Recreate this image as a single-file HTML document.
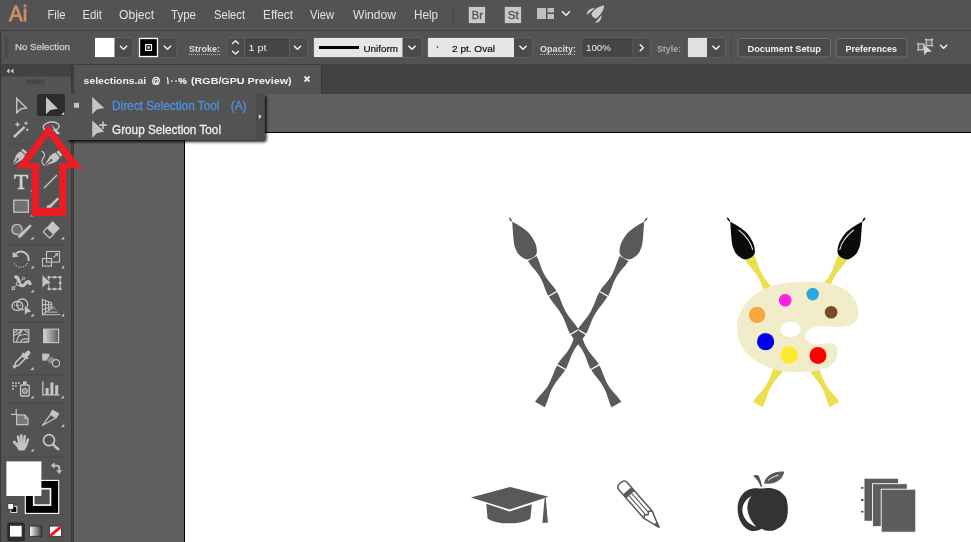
<!DOCTYPE html>
<html lang="en">
<head>
<meta charset="utf-8">
<title>selections.ai - Adobe Illustrator</title>
<style>
html,body{margin:0;padding:0;background:#535353;overflow:hidden;}
body{width:971px;height:542px;position:relative;font-family:"Liberation Sans", "DejaVu Sans", sans-serif;}
svg{position:absolute;left:0;top:0;display:block;will-change:transform;}
svg text{font-family:"Liberation Sans", "DejaVu Sans", sans-serif;}
</style>
</head>
<body>
<svg width="971" height="542" viewBox="0 0 971 542">
<rect x="0" y="0" width="971" height="542" fill="#535353"/>
<rect x="74" y="94" width="897" height="448" fill="#606060"/>
<rect x="184.5" y="132.5" width="790" height="420" fill="#ffffff" stroke="#000000" stroke-width="1"/>
<rect x="72" y="64" width="899" height="30" fill="#424242"/>
<rect x="74" y="65" width="247" height="29" fill="#535353"/>
<rect x="71" y="64" width="3" height="478" fill="#3a3a3a"/><rect x="72" y="77" width="1" height="465" fill="#444"/>
<rect x="0" y="30" width="971" height="1" fill="#434343"/>
<rect x="0" y="64" width="971" height="1" fill="#3f3f3f"/>
<rect x="0" y="31" width="1.2" height="33" fill="#3a3a3a"/>
<rect x="321" y="65" width="1" height="29" fill="#383838"/>
<rect x="0" y="65" width="71" height="11.4" fill="#424242"/>
<rect x="0" y="64" width="1" height="478" fill="#3a3a3a"/>
<text x="9" y="21.3" font-size="21.5" fill="#c9916b" font-weight="normal" text-anchor="start" textLength="18.2" lengthAdjust="spacingAndGlyphs" stroke="#c9916b" stroke-width="0.9">Ai</text>
<text x="47.5" y="19.3" font-size="13" fill="#e2e2e2" font-weight="normal" text-anchor="start" textLength="18" lengthAdjust="spacingAndGlyphs" >File</text>
<text x="82.5" y="19.3" font-size="13" fill="#e2e2e2" font-weight="normal" text-anchor="start" textLength="19.5" lengthAdjust="spacingAndGlyphs" >Edit</text>
<text x="119" y="19.3" font-size="13" fill="#e2e2e2" font-weight="normal" text-anchor="start" textLength="35" lengthAdjust="spacingAndGlyphs" >Object</text>
<text x="171" y="19.3" font-size="13" fill="#e2e2e2" font-weight="normal" text-anchor="start" textLength="25" lengthAdjust="spacingAndGlyphs" >Type</text>
<text x="214" y="19.3" font-size="13" fill="#e2e2e2" font-weight="normal" text-anchor="start" textLength="31" lengthAdjust="spacingAndGlyphs" >Select</text>
<text x="263" y="19.3" font-size="13" fill="#e2e2e2" font-weight="normal" text-anchor="start" textLength="30" lengthAdjust="spacingAndGlyphs" >Effect</text>
<text x="310" y="19.3" font-size="13" fill="#e2e2e2" font-weight="normal" text-anchor="start" textLength="24" lengthAdjust="spacingAndGlyphs" >View</text>
<text x="353" y="19.3" font-size="13" fill="#e2e2e2" font-weight="normal" text-anchor="start" textLength="43" lengthAdjust="spacingAndGlyphs" >Window</text>
<text x="414" y="19.3" font-size="13" fill="#e2e2e2" font-weight="normal" text-anchor="start" textLength="24" lengthAdjust="spacingAndGlyphs" >Help</text>
<rect x="452.5" y="5" width="1" height="20" fill="#444"/>
<rect x="468.8" y="6.9" width="16.3" height="16.2" fill="#c9c9c9"/>
<text x="471.8" y="19" font-size="10.8" fill="#555" font-weight="normal" text-anchor="start" textLength="11" lengthAdjust="spacingAndGlyphs" stroke="#555" stroke-width="0.35">Br</text>
<rect x="504.8" y="6.9" width="16.3" height="16.2" fill="#c9c9c9"/>
<text x="507.8" y="19" font-size="10.8" fill="#555" font-weight="normal" text-anchor="start" textLength="11" lengthAdjust="spacingAndGlyphs" stroke="#555" stroke-width="0.35">St</text>
<rect x="537" y="8" width="9" height="11" fill="#c0c0c0"/><rect x="547.5" y="8" width="6.5" height="4.5" fill="#c0c0c0"/><rect x="547.5" y="14" width="6.5" height="5" fill="#c0c0c0"/>
<path d="M562.5,11.7 L566,15.3 L569.5,11.7" fill="none" stroke="#f0f0f0" stroke-width="1.6" stroke-linecap="round" stroke-linejoin="round"/>
<g fill="#cdcdcd" transform="translate(604.2 5.6) rotate(45)"><path d="M0,0 C3,3.5 4.3,9 3.5,14.6 Q0,17.2 -3.5,14.6 C-4.3,9 -3,3.5 0,0 Z"/><path d="M4.6,8.6 C7.8,11 8.8,15.4 5.9,18.8 C5.4,16 5.4,13 4.6,8.6 Z"/><path d="M-4.6,8.6 C-7.8,11 -8.8,15.4 -5.9,18.8 C-5.4,16 -5.4,13 -4.6,8.6 Z"/></g>
<path d="M6.6,37.8 V57.2" stroke="#404040" stroke-width="3" stroke-dasharray="1 1"/>
<text x="15" y="49.9" font-size="9.7" fill="#cfcfcf" font-weight="normal" text-anchor="start" textLength="55" lengthAdjust="spacingAndGlyphs" stroke="#cfcfcf" stroke-width="0.25">No Selection</text>
<rect x="93.5" y="37.5" width="39.5" height="20" rx="2.5" fill="#4b4b4b" stroke="#606060" stroke-width="1"/>
<rect x="95" y="38" width="19.5" height="19" fill="#ffffff"/>
<path d="M120.4,46.2 L123.5,49.2 L126.6,46.2" fill="none" stroke="#f0f0f0" stroke-width="1.6" stroke-linecap="round" stroke-linejoin="round"/>
<rect x="137.5" y="37.5" width="39.5" height="20" rx="2.5" fill="#4b4b4b" stroke="#606060" stroke-width="1"/>
<rect x="139.5" y="38.5" width="18" height="18" fill="#000" stroke="#fff" stroke-width="1.3"/>
<rect x="145.7" y="44.6" width="5.8" height="5.8" fill="none" stroke="#fff" stroke-width="1.2"/><rect x="147.4" y="46.3" width="2.4" height="2.4" fill="#e4e4e4"/>
<path d="M164.4,46.2 L167.5,49.2 L170.6,46.2" fill="none" stroke="#f0f0f0" stroke-width="1.6" stroke-linecap="round" stroke-linejoin="round"/>
<text x="189" y="51.5" font-size="9.6" fill="#dcdcdc" font-weight="bold" text-anchor="start" textLength="31" lengthAdjust="spacingAndGlyphs" >Stroke:</text>
<path d="M189,54.5 H220" stroke="#bdbdbd" stroke-width="1" stroke-dasharray="1 1"/>
<rect x="227" y="37.5" width="80.5" height="20" rx="2.5" fill="#4b4b4b" stroke="#606060" stroke-width="1"/>
<rect x="245" y="38" width="44" height="19" fill="#454545"/>
<path d="M244.5,38 V57 M289.5,38 V57" stroke="#5f5f5f" stroke-width="1"/>
<path d="M232.5,43.6 L235.5,40.800000000000004 L238.5,43.6" fill="none" stroke="#f0f0f0" stroke-width="1.4" stroke-linecap="round" stroke-linejoin="round"/>
<path d="M232.5,51.2 L235.5,54.0 L238.5,51.2" fill="none" stroke="#f0f0f0" stroke-width="1.4" stroke-linecap="round" stroke-linejoin="round"/>
<text x="248.5" y="51" font-size="9.6" fill="#eaeaea" font-weight="normal" text-anchor="start" textLength="18" lengthAdjust="spacingAndGlyphs" >1 pt</text>
<path d="M294.4,46.2 L297.5,49.2 L300.6,46.2" fill="none" stroke="#f0f0f0" stroke-width="1.6" stroke-linecap="round" stroke-linejoin="round"/>
<rect x="313.5" y="37.5" width="108.5" height="20" rx="2.5" fill="#4b4b4b" stroke="#606060" stroke-width="1"/>
<rect x="314" y="38" width="88.5" height="19" fill="#e6e6e6"/>
<rect x="319" y="46" width="40" height="3" fill="#000"/>
<text x="363.5" y="51.5" font-size="9.6" fill="#111" font-weight="normal" text-anchor="start" textLength="34.5" lengthAdjust="spacingAndGlyphs" stroke="#111" stroke-width="0.2">Uniform</text>
<path d="M408.9,46.2 L412,49.2 L415.1,46.2" fill="none" stroke="#f0f0f0" stroke-width="1.6" stroke-linecap="round" stroke-linejoin="round"/>
<rect x="427.5" y="37.5" width="105" height="20" rx="2.5" fill="#4b4b4b" stroke="#606060" stroke-width="1"/>
<rect x="428" y="38" width="86" height="19" fill="#e6e6e6"/>
<circle cx="437.5" cy="47" r="0.8" fill="#222"/>
<text x="452" y="51.5" font-size="9.6" fill="#111" font-weight="normal" text-anchor="start" textLength="43" lengthAdjust="spacingAndGlyphs" stroke="#111" stroke-width="0.2">2 pt. Oval</text>
<path d="M519.9,46.2 L523,49.2 L526.1,46.2" fill="none" stroke="#f0f0f0" stroke-width="1.6" stroke-linecap="round" stroke-linejoin="round"/>
<text x="540" y="51.5" font-size="9.6" fill="#dcdcdc" font-weight="bold" text-anchor="start" textLength="36" lengthAdjust="spacingAndGlyphs" >Opacity:</text>
<path d="M540,54.5 H576" stroke="#bdbdbd" stroke-width="1" stroke-dasharray="1 1"/>
<rect x="582" y="37.5" width="69" height="20" rx="2.5" fill="#4b4b4b" stroke="#606060" stroke-width="1"/>
<rect x="582.5" y="38" width="50" height="19" fill="#454545"/>
<path d="M633,38 V57" stroke="#5f5f5f" stroke-width="1"/>
<text x="586" y="51" font-size="9.6" fill="#eaeaea" font-weight="normal" text-anchor="start" textLength="25" lengthAdjust="spacingAndGlyphs" >100%</text>
<path d="M640.2,44.7 L643.3,47.7 L640.2,50.7" fill="none" stroke="#f0f0f0" stroke-width="1.5" stroke-linecap="round" stroke-linejoin="round"/>
<text x="657" y="51.5" font-size="9.6" fill="#a9a9a9" font-weight="bold" text-anchor="start" textLength="24" lengthAdjust="spacingAndGlyphs" >Style:</text>
<rect x="687.5" y="37.5" width="38" height="20" rx="2.5" fill="#4b4b4b" stroke="#606060" stroke-width="1"/>
<rect x="688" y="38" width="19" height="19" fill="#e0e0e0"/>
<path d="M712.9,46.2 L716,49.2 L719.1,46.2" fill="none" stroke="#f0f0f0" stroke-width="1.6" stroke-linecap="round" stroke-linejoin="round"/>
<rect x="731" y="37" width="1" height="22" fill="#464646"/>
<rect x="738" y="38.5" width="92.5" height="18.5" rx="3" fill="#4a4a4a" stroke="#707070" stroke-width="1"/>
<text x="747.5" y="51.6" font-size="9.6" fill="#f2f2f2" font-weight="bold" text-anchor="start" textLength="73.5" lengthAdjust="spacingAndGlyphs" >Document Setup</text>
<rect x="836" y="38.5" width="71" height="18.5" rx="3" fill="#4a4a4a" stroke="#707070" stroke-width="1"/>
<text x="845.5" y="51.6" font-size="9.6" fill="#f2f2f2" font-weight="bold" text-anchor="start" textLength="51.5" lengthAdjust="spacingAndGlyphs" >Preferences</text>
<g fill="#6a6a6a" stroke="#d0d0d0" stroke-width="1.1"><rect x="918.2" y="44" width="5.6" height="5.8"/><rect x="926.2" y="39.8" width="5.8" height="5.8"/></g><g fill="#d0d0d0"><circle cx="917.8" cy="43.6" r="0.8"/><circle cx="917.8" cy="50.2" r="0.8"/><circle cx="925.8" cy="39.4" r="0.8"/><circle cx="932.4" cy="39.4" r="0.8"/><circle cx="932.4" cy="46" r="0.8"/></g><path d="M924.1,44.4 L924.1,55.4 L927,52 L931.8,51.4 Z" fill="#d4d4d4"/>
<path d="M940.5,45.3 L943.6,48.3 L946.7,45.3" fill="none" stroke="#f0f0f0" stroke-width="1.6" stroke-linecap="round" stroke-linejoin="round"/>
<text x="83.6" y="83.5" font-size="9.8" fill="#f0f0f0" font-weight="bold" text-anchor="start" textLength="62.6" lengthAdjust="spacingAndGlyphs" >selections.ai</text>
<text x="151.8" y="83.8" font-size="9.2" fill="#f0f0f0" font-weight="normal" text-anchor="start" textLength="8.6" lengthAdjust="spacingAndGlyphs" stroke="#f0f0f0" stroke-width="0.45">@</text>
<text x="165.8" y="83.5" font-size="10.5" fill="#f0f0f0" font-weight="bold" text-anchor="start" textLength="12.2" lengthAdjust="spacingAndGlyphs" >۱۰۰</text>
<text x="178.2" y="83.5" font-size="9.8" fill="#f0f0f0" font-weight="bold" text-anchor="start" textLength="8.6" lengthAdjust="spacingAndGlyphs" stroke="#f0f0f0" stroke-width="0.2">%</text>
<text x="191" y="83.5" font-size="9.8" fill="#f0f0f0" font-weight="bold" text-anchor="start" textLength="100.7" lengthAdjust="spacingAndGlyphs" >(RGB/GPU Preview)</text>
<path d="M304.5,76.5 L309.5,81.5 M309.5,76.5 L304.5,81.5" stroke="#e8e8e8" stroke-width="1.8"/>
<path d="M9.5,68.5 L6.5,71 L9.5,73.5 Z M13.5,68.5 L10.5,71 L13.5,73.5 Z" fill="#d0d0d0"/>
<path d="M26,82 H45" stroke="#3e3e3e" stroke-width="5" stroke-dasharray="1 1.1" transform="translate(0,0)"/>
<rect x="8" y="143.5" width="56" height="1" fill="#484848"/>
<rect x="8" y="244.5" width="56" height="1" fill="#484848"/>
<rect x="8" y="321.5" width="56" height="1" fill="#484848"/>
<rect x="8" y="374.5" width="56" height="1" fill="#484848"/>
<rect x="8" y="402.5" width="56" height="1" fill="#484848"/>
<rect x="8" y="456.5" width="56" height="1" fill="#484848"/>
<rect x="36.9" y="94" width="28.1" height="21.9" rx="3" fill="#2c2c2c"/>
<path d="M16.7,98.4 L16.7,112.6 L21,108.9 L26.4,108 Z" fill="none" stroke="#c4c4c4" stroke-width="1.45" stroke-linejoin="miter"/>
<path d="M46,97 L46,114.2 L50.3,110 L58,108.7 Z" fill="#c4c4c4"/>
<path d="M64.2,115 L61.0,115 L64.2,111.8 Z" fill="#c4c4c4"/>
<path d="M13.9,137 L24.6,126.8" stroke="#c4c4c4" stroke-width="2.5" stroke-linecap="butt"/>
<path d="M17.5,121.5 l0.9,2 l2,0.9 l-2,0.9 l-0.9,2 l-0.9,-2 l-2,-0.9 l2,-0.9 Z M26,121 l0.7,1.6 l1.6,0.7 l-1.6,0.7 l-0.7,1.6 l-0.7,-1.6 l-1.6,-0.7 l1.6,-0.7 Z M27.3,128 l0.6,1.2 l1.2,0.6 l-1.2,0.6 l-0.6,1.2 l-0.6,-1.2 l-1.2,-0.6 l1.2,-0.6 Z" fill="#c4c4c4"/>
<ellipse cx="51.2" cy="126.6" rx="8" ry="4.6" fill="none" stroke="#c4c4c4" stroke-width="1.4" transform="rotate(-6 51.2 126.6)"/>
<path d="M51.4,124.8 L60.4,133.8 L56.6,134.2 L54.4,130.4 Z" fill="#c4c4c4"/>
<g transform="translate(19.2 157.4) rotate(40) scale(0.95)" fill="#c4c4c4"><path d="M-2.9,-9.6 h5.8 v2.7 h-5.8 Z"/><path d="M-3.1,-6 h6.2 C4.6,-2.5 4.2,0.5 3,3.2 L0.55,9.6 L0.55,3.3 a1.15,1.15 0 1 0 -1.1,0 L-0.55,9.6 L-3,3.2 C-4.2,0.5 -4.6,-2.5 -3.1,-6 Z"/></g>
<g transform="translate(52.9 158.8) rotate(51) scale(1.03)" fill="#c4c4c4"><path d="M-2.9,-9.6 h5.8 v2.7 h-5.8 Z"/><path d="M-3.1,-6 h6.2 C4.6,-2.5 4.2,0.5 3,3.2 L0.55,9.6 L0.55,3.3 a1.15,1.15 0 1 0 -1.1,0 L-0.55,9.6 L-3,3.2 C-4.2,0.5 -4.6,-2.5 -3.1,-6 Z"/></g>
<path d="M42,151.4 C44.6,152.6 45.4,155.4 43.6,157.6 C41.4,160.2 41,163.6 44.6,165.4" fill="none" stroke="#c4c4c4" stroke-width="1.2" stroke-linecap="round"/>
<path d="M33.4,167.5 L30.2,167.5 L33.4,164.3 Z" fill="#c4c4c4"/>
<text x="14" y="189" font-size="19.4" fill="#d2d2d2" textLength="14.1" lengthAdjust="spacingAndGlyphs" stroke="#d2d2d2" stroke-width="0.45" style="font-family:'DejaVu Serif','Liberation Serif',serif">T</text>
<path d="M33.2,191.6 L30.000000000000004,191.6 L33.2,188.4 Z" fill="#c4c4c4"/>
<path d="M44,188 L57,175" stroke="#c4c4c4" stroke-width="1.5"/>
<path d="M64.2,191 L61.0,191 L64.2,187.8 Z" fill="#c4c4c4"/>
<rect x="13.8" y="200.2" width="14.6" height="12" fill="#717171" stroke="#c4c4c4" stroke-width="1.3"/>
<path d="M33.2,216.4 L30.000000000000004,216.4 L33.2,213.20000000000002 Z" fill="#c4c4c4"/>
<path d="M46.5,208.5 C46,206 47.5,204.5 49.5,205 L57.5,197.5 L59,199 L51.5,207 C51.5,209 49,210 46.5,208.5 Z" fill="#c4c4c4"/>
<path d="M64.2,216 L61.0,216 L64.2,212.8 Z" fill="#c4c4c4"/>
<circle cx="17" cy="229.4" r="5.1" fill="#6e6e6e" stroke="#c4c4c4" stroke-width="1.3"/>
<path d="M30.1,223.8 L32.3,226 L20.8,237.9 L17.9,238.3 L17.6,235.4 Z" fill="#c4c4c4" stroke="#535353" stroke-width="0.9"/>
<path d="M33.6,239.6 L30.400000000000002,239.6 L33.6,236.4 Z" fill="#c4c4c4"/>
<path d="M52.5,221 L59.9,228.4 L53.7,234.2 L46.9,227.6 Z" fill="#c4c4c4"/><path d="M46.9,227.6 L53.7,234.2 L49.6,238 L43.3,232 Z" fill="none" stroke="#c4c4c4" stroke-width="1.2" stroke-linejoin="round"/>
<path d="M64.2,239.6 L61.0,239.6 L64.2,236.4 Z" fill="#c4c4c4"/>
<path d="M15.6,254 A7.5,7.5 0 0 1 28.3,261" fill="none" stroke="#c4c4c4" stroke-width="1.9"/>
<path d="M27.6,263 A7.5,7.5 0 0 1 13.7,262" fill="none" stroke="#c4c4c4" stroke-width="1.3" stroke-dasharray="1 1.5"/>
<path d="M12.7,251.8 L12.7,257.6 L18.8,256.4 Z" fill="#c4c4c4"/>
<path d="M33.8,268.5 L30.599999999999998,268.5 L33.8,265.3 Z" fill="#c4c4c4"/>
<g fill="none" stroke="#c4c4c4" stroke-width="1.1"><rect x="46.5" y="251.5" width="13" height="10.6"/><rect x="42.5" y="258.5" width="9" height="7.6"/><path d="M53.4,257.6 L56.8,254.4"/></g><path d="M54.6,253.2 L58,253.2 L58,256.6 Z" fill="#c4c4c4"/>
<path d="M64.2,268.5 L61.0,268.5 L64.2,265.3 Z" fill="#c4c4c4"/>
<path d="M14.6,277.6 C17.4,275.8 18.2,278.6 18.9,281.8 C19.7,285.6 22.8,287.2 25.4,283.6 C27,281.2 29.6,280.2 30.2,285" fill="none" stroke="#c4c4c4" stroke-width="3.3" stroke-linecap="butt" stroke-linejoin="round"/>
<path d="M13.3,288.2 L23.4,278.5" stroke="#c4c4c4" stroke-width="0.9"/>
<g fill="#535353" stroke="#c4c4c4" stroke-width="1"><circle cx="17.9" cy="283.8" r="1.7"/><circle cx="23.5" cy="278.4" r="1.2"/><rect x="12.1" y="287" width="2.4" height="2.4"/></g>
<path d="M33.8,292.5 L30.599999999999998,292.5 L33.8,289.3 Z" fill="#c4c4c4"/>
<rect x="48.8" y="277.2" width="11.4" height="11.8" fill="none" stroke="#c4c4c4" stroke-width="1"/>
<g fill="#c4c4c4"><rect x="47.599999999999994" y="276.0" width="2.4" height="2.4"/><rect x="59.0" y="276.0" width="2.4" height="2.4"/><rect x="47.599999999999994" y="287.8" width="2.4" height="2.4"/><rect x="59.0" y="287.8" width="2.4" height="2.4"/><rect x="53.3" y="276.0" width="2.4" height="2.4"/><rect x="53.3" y="287.8" width="2.4" height="2.4"/><rect x="59.0" y="281.90000000000003" width="2.4" height="2.4"/></g>
<path d="M42.1,274.7 L42.1,288 L45.8,284.4 L51.4,283.2 Z" fill="#c4c4c4" stroke="#535353" stroke-width="0.6"/>
<g fill="none" stroke="#c4c4c4" stroke-width="1.3"><ellipse cx="17.4" cy="306" rx="5.4" ry="4.5"/><circle cx="22.3" cy="304.4" r="5.4"/></g><path d="M14,305.3 H23" stroke="#c4c4c4" stroke-width="1.2" stroke-dasharray="1 1"/>
<path d="M24.4,305 L24.4,315.6 L27.4,312.8 L32,311.7 Z" fill="#c4c4c4" stroke="#535353" stroke-width="0.8"/>
<path d="M33.8,316.5 L30.599999999999998,316.5 L33.8,313.3 Z" fill="#c4c4c4"/>
<g fill="none" stroke="#c4c4c4" stroke-width="1.1"><path d="M42.4,299.4 L51.6,302.8 L51.6,308.4 L42.4,314.7 Z"/><path d="M45.5,300.6 V312.6 M48.6,301.7 V310.5 M42.4,304.6 L51.6,304.7 M42.4,309.7 L51.6,306.7"/><path d="M47.4,312.1 H57.6 M42.4,314.7 H60.4" stroke-width="1"/></g><path d="M51.9,304.4 L57,309.8 L51.9,309.8 Z" fill="#7e7e7e"/>
<path d="M64.2,316.5 L61.0,316.5 L64.2,313.3 Z" fill="#c4c4c4"/>
<g fill="none" stroke="#c4c4c4" stroke-width="1.15"><rect x="13.6" y="329.6" width="15.2" height="12.6"/><path d="M16.4,342.2 C17.2,337.6 19.2,334.6 22.6,329.6 M13.6,335.6 C17,334.6 19.6,332.6 21,329.6 M19,336 C22,334.4 25.4,334.2 28.8,335 M20.4,342.2 C21,339.6 24.4,338.4 28.8,338.6 M17.4,329.6 C17,331.4 15.6,332.4 13.6,332.6 M24.4,342.2 C25.4,341 26.8,340.6 28.8,340.8 M25,329.6 C24.6,331.6 26.4,332.4 28.8,332"/></g>
<defs><linearGradient id="gr1" x1="0" y1="0" x2="1" y2="0"><stop offset="0" stop-color="#d8d8d8"/><stop offset="1" stop-color="#5a5a5a"/></linearGradient><linearGradient id="gr2" x1="0" y1="0" x2="1" y2="0"><stop offset="0" stop-color="#ffffff"/><stop offset="1" stop-color="#3a3a3a"/></linearGradient></defs>
<rect x="43.6" y="329.2" width="15" height="13.4" fill="url(#gr1)" stroke="#c4c4c4" stroke-width="1.2"/>
<g transform="translate(21.2 359.8) rotate(45)"><path d="M-2.2,-10 a2.2,2.2 0 0 1 4.4,0 v3.4 h1.7 v2.2 h-7.8 v-2.2 h1.7 Z" fill="#c4c4c4"/><path d="M-2.1,-3.8 h4.2 v9.2 l-1.3,2.6 v2.2 h-1.6 v-2.2 L-2.1,5.4 Z" fill="none" stroke="#c4c4c4" stroke-width="1.5"/></g>
<path d="M33.6,370 L30.400000000000002,370 L33.6,366.8 Z" fill="#c4c4c4"/>
<rect x="42.2" y="353.6" width="7" height="7" fill="#c4c4c4"/><circle cx="51.2" cy="360.2" r="3.6" fill="#8a8a8a" stroke="#535353" stroke-width="0.8"/><circle cx="56" cy="363.2" r="3.6" fill="#535353" stroke="#c4c4c4" stroke-width="1.2"/>
<g fill="#c4c4c4"><rect x="12.2" y="382.2" width="1.7" height="1.7"/><rect x="15.1" y="382.2" width="1.7" height="1.7"/><rect x="18" y="382.2" width="1.7" height="1.7"/><rect x="12.2" y="385.1" width="1.7" height="1.7"/><rect x="15.1" y="385.1" width="1.7" height="1.7"/><rect x="12.2" y="388" width="1.7" height="1.7"/><rect x="23" y="381.4" width="3.6" height="2.6"/></g>
<rect x="20.6" y="385" width="8.6" height="11" rx="1" fill="none" stroke="#c4c4c4" stroke-width="1.3"/><circle cx="24.9" cy="391" r="2.3" fill="none" stroke="#c4c4c4" stroke-width="1.3"/><circle cx="24.9" cy="391" r="0.8" fill="#c4c4c4"/>
<path d="M33.6,398.6 L30.400000000000002,398.6 L33.6,395.40000000000003 Z" fill="#c4c4c4"/>
<path d="M42.8,381.4 V394.8 H59.5" fill="none" stroke="#c4c4c4" stroke-width="1.3"/><g fill="#c4c4c4"><rect x="45.6" y="388" width="3" height="6.8"/><rect x="50.4" y="382.4" width="3" height="12.4"/><rect x="55.2" y="385.2" width="3" height="9.6"/></g>
<path d="M63.8,398.6 L60.599999999999994,398.6 L63.8,395.40000000000003 Z" fill="#c4c4c4"/>
<path d="M11,414.3 H17 M16.2,409 V415" stroke="#c4c4c4" stroke-width="1.2" fill="none"/><path d="M16.6,414.9 H24.8 L28,418.4 V424.6 H16.6 Z" fill="#787878" stroke="#c4c4c4" stroke-width="1.2"/><path d="M24.8,414.9 V418.4 H28" fill="none" stroke="#c4c4c4" stroke-width="1"/>
<path d="M42.4,425.6 L50.4,414.6 L56,417.8 Z" fill="none" stroke="#c4c4c4" stroke-width="1.2" stroke-linejoin="round"/><path d="M52.3,409.5 L59.4,413.4 L56.9,417.9 L49.8,413.9 Z" fill="#c4c4c4"/>
<path d="M64.2,427 L61.0,427 L64.2,423.8 Z" fill="#c4c4c4"/>
<g fill="none" stroke="#c4c4c4" stroke-linecap="round" stroke-width="2.5"><path d="M18,436.6 L19.7,444"/><path d="M21.3,435.4 L21.7,444"/><path d="M24.7,436.3 L23.9,444"/><path d="M28,439.6 L26,445.4"/><path d="M14.2,442 L18.4,446.6" stroke-width="2.8"/></g><path d="M17.2,442.6 L27,443.4 C26.8,447 25.4,449.4 24.2,450.4 L18.8,450.4 C16.8,448.4 16.2,446 17.2,442.6 Z" fill="#c4c4c4"/>
<path d="M33.8,451.6 L30.599999999999998,451.6 L33.8,448.40000000000003 Z" fill="#c4c4c4"/>
<circle cx="49" cy="440.2" r="5.5" fill="none" stroke="#c4c4c4" stroke-width="1.7"/><path d="M53.2,444.6 L58.2,449.2" stroke="#c4c4c4" stroke-width="2.6" stroke-linecap="round"/>
<rect x="25.3" y="480.4" width="33.4" height="33" fill="#000" stroke="#fff" stroke-width="1.1"/>
<rect x="33.7" y="488.7" width="16.8" height="16.4" fill="#535353" stroke="#fff" stroke-width="1.6"/>
<rect x="6.4" y="461.4" width="35" height="34.6" fill="#ffffff"/>
<path d="M54,465.6 H57 C58.6,465.6 59.2,466.4 59.2,468 V470.6" fill="none" stroke="#c4c4c4" stroke-width="1.7"/><path d="M50.8,465.6 L54.6,462.6 V468.6 Z M59.2,474 L56.2,470.2 H62.2 Z" fill="#c4c4c4"/>
<rect x="10.8" y="506.4" width="6" height="6" fill="#000" stroke="#e8e8e8" stroke-width="1"/><rect x="7.8" y="503.4" width="5.8" height="5.8" fill="#fff" stroke="#2a2a2a" stroke-width="0.8"/>
<rect x="7.2" y="522.4" width="17.7" height="18.8" rx="2.5" fill="#2c2c2c"/>
<rect x="10" y="525.8" width="11.7" height="10.8" fill="#fff"/>
<rect x="29.6" y="526.1" width="12.2" height="10.2" fill="url(#gr2)" stroke="#2a2a2a" stroke-width="0.8"/>
<rect x="49.4" y="526.1" width="12.2" height="10.2" fill="#fff" stroke="#2a2a2a" stroke-width="0.8"/><path d="M50.2,535.8 L61,526.6" stroke="#ee1c24" stroke-width="3"/>
<path transform="translate(508.6 217.6) rotate(-30.0)" d="M1.1,5.3 C1.75,6.40 3.65,9.20 5.00,11.90 C6.35,14.60 8.28,18.32 9.20,21.50 C10.12,24.68 10.43,28.13 10.50,31.00 C10.57,33.87 10.48,36.22 9.60,38.70 C8.72,41.18 7.57,44.75 5.20,45.90 C2.83,47.05 -2.15,47.02 -4.60,45.60 C-7.05,44.18 -8.70,40.07 -9.50,37.40 C-10.30,34.73 -9.65,31.73 -9.40,29.60 C-9.15,27.47 -8.63,26.33 -8.00,24.60 C-7.37,22.87 -7.12,22.42 -5.60,19.20 C-4.08,15.98 -0.02,7.62 1.10,5.30 Z M0.2,0 C1.3,0.6 1.8,2.2 1.5,3.8 C1.4,4.6 0.9,5.4 1.1,5.6 C0.2,4.8 -0.8,2.4 0.2,0 Z M-5.0,47.3 L5.0,47.3 C4.7,55.3 2.5,59.349999999999994 2.5,67.35 C2.5,75.35 4.3999999999999995,79.4 4.8,87.4 L-4.8,87.4 C-4.3999999999999995,79.4 -2.5,75.35 -2.5,67.35 C-2.5,59.349999999999994 -4.7,55.3 -5.0,47.3 Z M-4.7,88.7 L4.7,88.7 C4.4,96.7 2.5,102.05000000000001 2.5,110.05000000000001 C2.5,118.05000000000001 4.3999999999999995,123.4 4.8,131.4 L-4.8,131.4 C-4.3999999999999995,123.4 -2.5,118.05000000000001 -2.5,110.05000000000001 C-2.5,102.05000000000001 -4.4,96.7 -4.7,88.7 Z M-4.7,132.7 L4.7,132.7 C4.4,140.7 2.5,144.39999999999998 2.5,152.39999999999998 C2.5,160.39999999999998 4.3999999999999995,164.1 4.8,172.1 L-4.8,172.1 C-4.3999999999999995,164.1 -2.5,160.39999999999998 -2.5,152.39999999999998 C-2.5,144.39999999999998 -4.4,140.7 -4.7,132.7 Z M-4.7,173.4 L4.7,173.4 C4.4,181.4 2.5,186.60000000000002 2.5,194.60000000000002 C2.5,202.60000000000002 5.199999999999999,207.8 5.6,215.8 L-5.6,215.8 C-5.199999999999999,207.8 -2.5,202.60000000000002 -2.5,194.60000000000002 C-2.5,186.60000000000002 -4.4,181.4 -4.7,173.4 Z" fill="#595959"/>
<path transform="translate(647.8 217.6) scale(-1 1) rotate(-30.0)" d="M1.1,5.3 C1.75,6.40 3.65,9.20 5.00,11.90 C6.35,14.60 8.28,18.32 9.20,21.50 C10.12,24.68 10.43,28.13 10.50,31.00 C10.57,33.87 10.48,36.22 9.60,38.70 C8.72,41.18 7.57,44.75 5.20,45.90 C2.83,47.05 -2.15,47.02 -4.60,45.60 C-7.05,44.18 -8.70,40.07 -9.50,37.40 C-10.30,34.73 -9.65,31.73 -9.40,29.60 C-9.15,27.47 -8.63,26.33 -8.00,24.60 C-7.37,22.87 -7.12,22.42 -5.60,19.20 C-4.08,15.98 -0.02,7.62 1.10,5.30 Z M0.2,0 C1.3,0.6 1.8,2.2 1.5,3.8 C1.4,4.6 0.9,5.4 1.1,5.6 C0.2,4.8 -0.8,2.4 0.2,0 Z M-5.0,47.3 L5.0,47.3 C4.7,55.3 2.5,59.349999999999994 2.5,67.35 C2.5,75.35 4.3999999999999995,79.4 4.8,87.4 L-4.8,87.4 C-4.3999999999999995,79.4 -2.5,75.35 -2.5,67.35 C-2.5,59.349999999999994 -4.7,55.3 -5.0,47.3 Z M-4.7,88.7 L4.7,88.7 C4.4,96.7 2.5,102.05000000000001 2.5,110.05000000000001 C2.5,118.05000000000001 4.3999999999999995,123.4 4.8,131.4 L-4.8,131.4 C-4.3999999999999995,123.4 -2.5,118.05000000000001 -2.5,110.05000000000001 C-2.5,102.05000000000001 -4.4,96.7 -4.7,88.7 Z M-4.7,132.7 L4.7,132.7 C4.4,140.7 2.5,144.39999999999998 2.5,152.39999999999998 C2.5,160.39999999999998 4.3999999999999995,164.1 4.8,172.1 L-4.8,172.1 C-4.3999999999999995,164.1 -2.5,160.39999999999998 -2.5,152.39999999999998 C-2.5,144.39999999999998 -4.4,140.7 -4.7,132.7 Z M-4.7,173.4 L4.7,173.4 C4.4,181.4 2.5,186.60000000000002 2.5,194.60000000000002 C2.5,202.60000000000002 5.199999999999999,207.8 5.6,215.8 L-5.6,215.8 C-5.199999999999999,207.8 -2.5,202.60000000000002 -2.5,194.60000000000002 C-2.5,186.60000000000002 -4.4,181.4 -4.7,173.4 Z" fill="#595959"/>
<g transform="translate(726.6 217.6) rotate(-30.0)"><path d="M-5.0,46 L5.0,46 C4.7,54 2.5,59.099999999999994 2.5,67.1 C2.5,75.1 4.3999999999999995,80.2 4.8,88.2 L-4.8,88.2 C-4.3999999999999995,80.2 -2.5,75.1 -2.5,67.1 C-2.5,59.099999999999994 -4.7,54 -5.0,46 Z M-4.8,88 L4.8,88 C4.5,96 2.5,102.1 2.5,110.1 C2.5,118.1 4.3999999999999995,124.19999999999999 4.8,132.2 L-4.8,132.2 C-4.3999999999999995,124.19999999999999 -2.5,118.1 -2.5,110.1 C-2.5,102.1 -4.5,96 -4.8,88 Z M-4.8,132 L4.8,132 C4.5,140 2.5,144.4 2.5,152.4 C2.5,160.4 4.3999999999999995,164.8 4.8,172.8 L-4.8,172.8 C-4.3999999999999995,164.8 -2.5,160.4 -2.5,152.4 C-2.5,144.4 -4.5,140 -4.8,132 Z M-4.8,172.6 L4.8,172.6 C4.5,180.6 2.5,186.2 2.5,194.2 C2.5,202.2 5.199999999999999,207.8 5.6,215.8 L-5.6,215.8 C-5.199999999999999,207.8 -2.5,202.2 -2.5,194.2 C-2.5,186.2 -4.5,180.6 -4.8,172.6 Z" fill="#ebdf4f"/><path d="M1.1,5.3 C1.75,6.40 3.65,9.20 5.00,11.90 C6.35,14.60 8.28,18.32 9.20,21.50 C10.12,24.68 10.43,28.13 10.50,31.00 C10.57,33.87 10.48,36.22 9.60,38.70 C8.72,41.18 7.57,44.75 5.20,45.90 C2.83,47.05 -2.15,47.02 -4.60,45.60 C-7.05,44.18 -8.70,40.07 -9.50,37.40 C-10.30,34.73 -9.65,31.73 -9.40,29.60 C-9.15,27.47 -8.63,26.33 -8.00,24.60 C-7.37,22.87 -7.12,22.42 -5.60,19.20 C-4.08,15.98 -0.02,7.62 1.10,5.30 Z M0.2,0 C1.3,0.6 1.8,2.2 1.5,3.8 C1.4,4.6 0.9,5.4 1.1,5.6 C0.2,4.8 -0.8,2.4 0.2,0 Z" fill="#0a0a0a"/><path d="M6.6,40.5 C8.6,34 7.8,26 4.4,17" fill="none" stroke="#f6f6f6" stroke-width="1.1" stroke-linecap="round"/></g>
<g transform="translate(865.8 217.6) scale(-1 1) rotate(-30.0)"><path d="M-5.0,46 L5.0,46 C4.7,54 2.5,59.099999999999994 2.5,67.1 C2.5,75.1 4.3999999999999995,80.2 4.8,88.2 L-4.8,88.2 C-4.3999999999999995,80.2 -2.5,75.1 -2.5,67.1 C-2.5,59.099999999999994 -4.7,54 -5.0,46 Z M-4.8,88 L4.8,88 C4.5,96 2.5,102.1 2.5,110.1 C2.5,118.1 4.3999999999999995,124.19999999999999 4.8,132.2 L-4.8,132.2 C-4.3999999999999995,124.19999999999999 -2.5,118.1 -2.5,110.1 C-2.5,102.1 -4.5,96 -4.8,88 Z M-4.8,132 L4.8,132 C4.5,140 2.5,144.4 2.5,152.4 C2.5,160.4 4.3999999999999995,164.8 4.8,172.8 L-4.8,172.8 C-4.3999999999999995,164.8 -2.5,160.4 -2.5,152.4 C-2.5,144.4 -4.5,140 -4.8,132 Z M-4.8,172.6 L4.8,172.6 C4.5,180.6 2.5,186.2 2.5,194.2 C2.5,202.2 5.199999999999999,207.8 5.6,215.8 L-5.6,215.8 C-5.199999999999999,207.8 -2.5,202.2 -2.5,194.2 C-2.5,186.2 -4.5,180.6 -4.8,172.6 Z" fill="#ebdf4f"/><path d="M1.1,5.3 C1.75,6.40 3.65,9.20 5.00,11.90 C6.35,14.60 8.28,18.32 9.20,21.50 C10.12,24.68 10.43,28.13 10.50,31.00 C10.57,33.87 10.48,36.22 9.60,38.70 C8.72,41.18 7.57,44.75 5.20,45.90 C2.83,47.05 -2.15,47.02 -4.60,45.60 C-7.05,44.18 -8.70,40.07 -9.50,37.40 C-10.30,34.73 -9.65,31.73 -9.40,29.60 C-9.15,27.47 -8.63,26.33 -8.00,24.60 C-7.37,22.87 -7.12,22.42 -5.60,19.20 C-4.08,15.98 -0.02,7.62 1.10,5.30 Z M0.2,0 C1.3,0.6 1.8,2.2 1.5,3.8 C1.4,4.6 0.9,5.4 1.1,5.6 C0.2,4.8 -0.8,2.4 0.2,0 Z" fill="#0a0a0a"/><path d="M6.6,40.5 C8.6,34 7.8,26 4.4,17" fill="none" stroke="#f6f6f6" stroke-width="1.1" stroke-linecap="round"/></g>
<path d="M737.0,327.5 C737.0,307.4 754.4,290.1 775.8,284.7 C794.5,280.7 815.9,280.2 832.0,283.9 C848.0,288.2 858.7,299.4 858.7,314.1 C858.2,324.8 846.7,328.3 832.0,326.7 C818.6,325.1 806.0,326.7 805.2,335.5 C804.7,344.3 815.9,345.4 825.3,343.3 C836.0,341.7 839.4,347.5 836.8,356.9 C833.3,369.5 813.2,372.7 795.1,372.1 C765.1,371.6 737.0,355.6 737.0,327.5 Z" fill="#f1edca"/>
<ellipse cx="790.5" cy="329.4" rx="10.2" ry="7.6" fill="#ffffff"/>
<circle cx="757.1" cy="314.9" r="8.2" fill="#f8a642"/>
<circle cx="785.2" cy="300.2" r="6.3" fill="#ff1fe0"/>
<circle cx="812.7" cy="294.1" r="6.3" fill="#29a8e1"/>
<circle cx="831.1" cy="312.2" r="6.3" fill="#7a4a21"/>
<circle cx="765.6" cy="341.7" r="8.6" fill="#0000ee"/>
<circle cx="789.2" cy="355.0" r="8.8" fill="#ffe92e"/>
<circle cx="818.0" cy="355.6" r="8.5" fill="#ff0000"/>
<path d="M470.8,497.6 L510.2,487 L548.6,496.8 L509.6,509.4 Z" fill="#595959"/>
<path d="M486.2,503.8 L509.6,511.4 L531.8,504.2 L530.4,518.4 C521,525 497,525 487.6,518.4 Z" fill="#595959"/>
<path d="M544.6,498.6 L545.8,498.3 L547.9,522.8 H542.4 Z" fill="#595959"/>
<g transform="translate(618.9 489.8) rotate(-41.2)" fill="none" stroke="#595959" stroke-width="1.5" stroke-linejoin="round"><path d="M0,0 C0,-3 1.5,-4.2 5.5,-4.2 C9.5,-4.2 11,-3 11,0 V38 L5.5,54.5 L0,38 Z"/><path d="M0,8.6 H11" stroke-width="5"/><path d="M3.7,11 V37 M7.3,11 V37" stroke-width="1.1"/><path d="M0,38 L2.75,35.6 L5.5,38 L8.25,35.6 L11,38"/><path d="M4,50 L5.5,54.5 L7,50 Z" fill="#595959"/></g>
<path d="M762.3,488.5 C770.6,486.9 780.3,488.8 785.6,497.1 C788.3,502.3 788.3,512.0 787.0,517.6 C785.3,523.8 781.0,527.9 775.5,529.7 C770.0,531.9 765.1,530.6 761.8,528.8 C758.9,530.8 752.7,532.2 747.8,529.5 C740.5,524.8 737.2,516.2 737.7,506.5 C738.3,497.1 744.4,489.9 752.7,488.5 C757.5,487.8 760.3,488.8 762.3,488.5 Z" fill="#333333"/>
<path d="M751.6,496.0 C745.7,498.9 741.9,505.1 742.4,511.3 C743.0,518.3 748.5,524.5 756.3,526.7 C749.9,520.3 747.1,512.7 747.4,506.5 C747.7,502.1 749.2,498.9 751.6,496.0 Z" fill="#ffffff"/>
<path d="M753.2,476.1 C754.7,474.7 757.6,474.7 759.0,476.3 C760.4,479.5 761.5,483.0 762.2,486.6 L760.8,487.1 C759.6,483.0 756.5,478.8 753.2,476.1 Z" fill="#555555"/>
<path d="M764.1,483.4 C764.3,477.2 772.7,470.5 784.2,471.5 C783.6,478.8 775.1,485.5 764.1,483.4 Z" fill="#5a5a5a"/>
<path d="M768.2,480.2 C771.3,477.7 774.5,476.3 778.3,475.2" stroke="#fff" stroke-width="0.9" fill="none" stroke-linecap="round"/>
<path d="M861,487.8 H865 M861,500 H865 M861,511.6 H865" stroke="#5c5c5c" stroke-width="1.8"/>
<rect x="864" y="478.2" width="34.6" height="43" fill="#5c5c5c" stroke="#ffffff" stroke-width="0.9"/>
<rect x="872.6" y="483.7" width="34.6" height="43" fill="#5c5c5c" stroke="#ffffff" stroke-width="0.9"/>
<rect x="881.2" y="489.2" width="34.6" height="43" fill="#5c5c5c" stroke="#ffffff" stroke-width="0.9"/>
<defs><filter id="sh" x="-10%" y="-20%" width="125%" height="150%"><feGaussianBlur in="SourceAlpha" stdDeviation="1.8"/><feOffset dx="2" dy="2"/><feComponentTransfer><feFuncA type="linear" slope="0.9"/></feComponentTransfer><feMerge><feMergeNode/><feMergeNode in="SourceGraphic"/></feMerge></filter></defs>
<g filter="url(#sh)"><rect x="66.5" y="93.5" width="198" height="46.5" rx="2" fill="#525252"/></g>
<path d="M256,93.5 H262.5 a2,2 0 0 1 2,2 V138 a2,2 0 0 1 -2,2 H256 Z" fill="#4b4b4b"/>
<path d="M258.8,114 L261.6,116.6 L258.8,119.2 Z" fill="#d8d8d8"/>
<rect x="74" y="102.8" width="5" height="5" fill="#c2c2c2"/>
<path d="M92.2,97 L92.2,114.2 L96.8,109.6 L104.2,108 Z" fill="#c4c4c4"/>
<text x="112" y="109.8" font-size="13" fill="#4d93de" font-weight="normal" text-anchor="start" textLength="107.5" lengthAdjust="spacingAndGlyphs" stroke="#4d93de" stroke-width="0.3">Direct Selection Tool</text>
<text x="230.8" y="109.8" font-size="13" fill="#4d93de" font-weight="normal" text-anchor="start" textLength="15.6" lengthAdjust="spacingAndGlyphs" stroke="#4d93de" stroke-width="0.3">(A)</text>
<path d="M92.2,120.6 L92.2,137.8 L96.8,133.2 L104.2,131.6 Z" fill="#c4c4c4"/>
<path d="M99.2,125.2 H106.8 M103,121.4 V129" stroke="#c4c4c4" stroke-width="1.7"/>
<text x="112" y="133.8" font-size="13" fill="#efefef" font-weight="normal" text-anchor="start" textLength="109" lengthAdjust="spacingAndGlyphs" stroke="#efefef" stroke-width="0.3">Group Selection Tool</text>
<path fill-rule="evenodd" fill="#ed1c24" d="M48.4,124.8 L82.4,168.6 L66.3,168.6 L66.3,216 L31.6,216 L31.6,168.6 L16,168.6 Z M48.6,135.8 L28.5,163 L39.2,163 L39.2,207.8 L59.2,207.8 L59.2,163 L69,163 Z"/>
</svg>
</body>
</html>
